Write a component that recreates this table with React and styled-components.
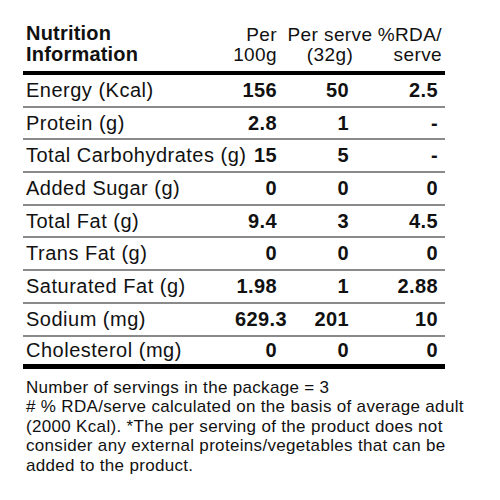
import React from 'react'
import styled, { createGlobalStyle } from 'styled-components';

const Global = createGlobalStyle`
    body {
        margin: 0;
        background: #fff;
        font-family: "Liberation Sans", Arial, sans-serif;
        color: #111;
    }
`;

const Label = styled.div`
    width: 422px;
    padding: 23px 0 0 23px;
`;

const Head = styled.div`
    display: grid;
    grid-template-columns: 190px 64px 106px 62px;
    align-items: end;
    padding-bottom: 6px;
    border-bottom: solid 4px #000;
`;

const Title = styled.h1`
    margin: 0;
    padding-left: 3px;
    font-size: 20px;
    line-height: 21px;
    font-weight: bold;
    letter-spacing: 0.2px;
`;

const ColHead = styled.div`
    font-size: 19px;
    line-height: 20px;
    letter-spacing: 0.4px;
    white-space: nowrap;
    text-align: ${props => props.center ? 'center' : 'right'};
    justify-self: ${props => props.center ? 'center' : 'end'};
    padding-right: ${props => props.pad || 0}px;
`;

const Row = styled.div`
    display: grid;
    grid-template-columns: 212px 45px 73px 92px;
    align-items: center;
    height: 30.7px;
    border-bottom: solid 2px #8a8a8a;
    ${props => props.last && `
        height: 27px;
        border-bottom: solid 5px #000;
    `}
`;

const Name = styled.div`
    padding-left: 3px;
    font-size: 20px;
    letter-spacing: 0.5px;
    white-space: nowrap;
`;

const Value = styled.div`
    font-size: 20px;
    font-weight: bold;
    letter-spacing: 0.4px;
    text-align: right;
    padding-right: ${props => props.pad || 0}px;
`;

const Notes = styled.p`
    margin: 9px 0 0 3px;
    width: 470px;
    font-size: 17px;
    line-height: 19.5px;
    letter-spacing: 0.32px;
    white-space: nowrap;
`;

const rows = [
    ['Energy (Kcal)', '156', '50', '2.5'],
    ['Protein (g)', '2.8', '1', '-'],
    ['Total Carbohydrates (g)', '15', '5', '-'],
    ['Added Sugar (g)', '0', '0', '0'],
    ['Total Fat (g)', '9.4', '3', '4.5'],
    ['Trans Fat (g)', '0', '0', '0'],
    ['Saturated Fat (g)', '1.98', '1', '2.88'],
    ['Sodium (mg)', '629.3', '201', '10'],
    ['Cholesterol (mg)', '0', '0', '0'],
];

export default function App() {
    return (
        <>
            <Global />
            <Label>
                <Head>
                    <Title>Nutrition<br />Information</Title>
                    <ColHead>Per<br />100g</ColHead>
                    <ColHead center>Per serve<br />(32g)</ColHead>
                    <ColHead pad={3}>%RDA/<br />serve</ColHead>
                </Head>
                {rows.map((r, i) => (
                    <Row key={r[0]} last={i === rows.length - 1}>
                        <Name>{r[0]}</Name>
                        <Value pad={3}>{r[1]}</Value>
                        <Value pad={4}>{r[2]}</Value>
                        <Value pad={7}>{r[3]}</Value>
                    </Row>
                ))}
                <Notes>
                    Number of servings in the package = 3<br />
                    # % RDA/serve calculated on the basis of average adult<br />
                    (2000 Kcal). *The per serving of the product does not<br />
                    consider any external proteins/vegetables that can be<br />
                    added to the product.
                </Notes>
            </Label>
        </>
    )
}
